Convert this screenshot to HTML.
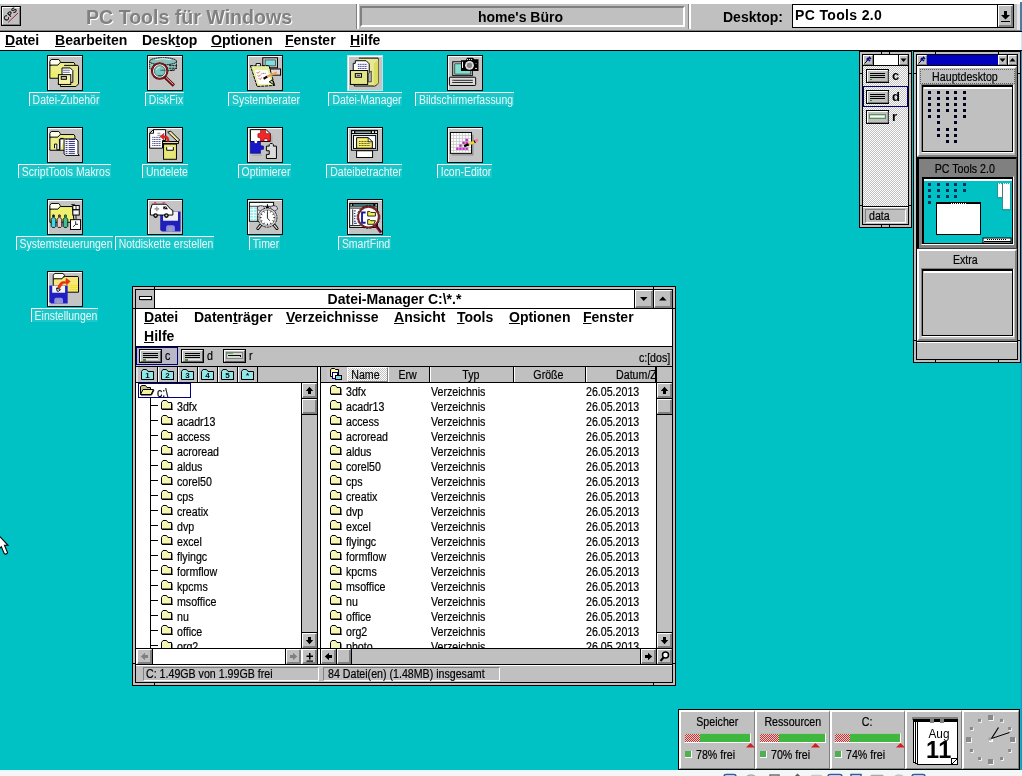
<!DOCTYPE html>
<html lang="de">
<head>
<meta charset="utf-8">
<title>PC Tools für Windows</title>
<style>
*{box-sizing:border-box;margin:0;padding:0}
html,body{width:1022px;height:776px;overflow:hidden}
body{position:relative;background:#00c2c4;font-family:"Liberation Sans",sans-serif;color:#000;font-size:12.5px;line-height:1}
#w{position:absolute;left:0;top:0;width:1022px;height:776px;overflow:hidden;will-change:transform}
.a{position:absolute}
.b{font-weight:bold;font-size:14px;white-space:nowrap}
u{text-decoration:underline;text-underline-offset:1px;text-decoration-thickness:1px}
.s{font-size:12.3px;line-height:17px;white-space:nowrap;-webkit-text-stroke:.2px #000;transform:scaleX(.865);transform-origin:0 0;display:inline-block}
.g{background:#c0c0c0}
/* top bar */
#top{left:0;top:0;width:1022px;height:32px;background:#c0c0c0;border-top:4px solid #fff;border-bottom:1px solid #000;box-shadow:inset 0 -1px 0 #808080}
#menu{left:0;top:32px;width:1022px;height:19px;background:#fff;border-bottom:1px solid #000}
#menu span{position:absolute;top:1px}
.raised{border:1px solid;border-color:#fff #808080 #808080 #fff}
.sunken{border:1px solid;border-color:#808080 #fff #fff #808080}
/* desktop icons */
.ic{width:36px;height:36px;border:1px solid #000;background:#c4c4c4;overflow:hidden;box-shadow:inset 1px 1px 0 #fff}
.ic svg{position:absolute;left:0;top:0}
.il{height:14px;background:rgba(255,255,255,.1);color:rgba(255,255,255,.9);font-size:12.3px;line-height:14px;white-space:nowrap;border-left:1px solid #fff;border-top:1px solid #fff}
.il span{position:absolute;left:50%;top:0;margin-left:1px;display:inline-block;transform:translateX(-50%) scaleX(.85)}
.ic.sel{border-color:#b8e4e4}
/* file manager */
.bt{background:#c0c0c0;border:1px solid;border-color:#fff #808080 #808080 #fff;box-shadow:inset -1px -1px 0 #808080}
.bt svg{left:0;top:0}
.row{white-space:nowrap;overflow:hidden;width:140px}
.row .fi{position:absolute;left:0;top:1px}
.row .s{position:absolute;top:0px}
.hc{position:relative;top:0px;transform-origin:50% 0}
.mi{line-height:16px}
/* right-hand windows */
.tb{background:#c0c0c0;border:1px solid;border-color:#fff #808080 #808080 #fff}
.tb svg{left:-1px !important;top:-1px !important}

</style>
</head>
<body>
<div id="w">
<div id="top" class="a">
  <div class="a" style="left:1px;top:2px;width:20px;height:20px;border:1px solid #000;background:#c0c0c0">
    <div class="a" style="left:0;top:0;width:18px;height:18px;border:1px solid;border-color:#fff #808080 #808080 #fff"></div>
    <svg class="a" style="left:0;top:0" width="18" height="18" viewBox="0 0 18 18"><line x1="6" y1="15.500" x2="16" y2="6" stroke="#a02040" stroke-width="1"/><text x="0" y="0" font-size="7" font-family="Liberation Sans,sans-serif" transform="translate(4.200 14.400) rotate(-45)" fill="#000" stroke="#000" stroke-width=".3" letter-spacing="0.700">CPS</text></svg>
  </div>
  <div class="a" id="ttl" style="left:86px;top:2px;font-weight:bold;font-size:20.5px;line-height:22px;color:#808080;text-shadow:1px 1px 0 #fff;white-space:nowrap;transform:scaleX(.955);transform-origin:0 0">PC Tools für Windows</div>
  <div class="a" style="left:356px;top:0px;width:3px;height:25px;border-left:1px solid #808080;background:#fff"></div>
  <div class="a" style="left:360px;top:2px;width:325px;height:21px;border:2px solid;border-color:#808080 #fff #fff #808080"></div>
  <div class="a b" id="hb" style="left:478px;top:6px">home's Büro</div>
  <div class="a" style="left:688px;top:0px;width:3px;height:25px;border-left:1px solid #808080;background:#fff"></div>
  <div class="a b" id="dl" style="left:723px;top:6px">Desktop:</div>
  <div class="a" style="left:792px;top:0px;width:222px;height:24px;border:1px solid #000;background:#fff">
    <div class="a b" id="cb" style="left:2px;top:3px;letter-spacing:.35px">PC Tools 2.0</div>
    <div class="a" style="left:204px;top:0px;width:1px;height:22px;background:#000"></div>
    <div class="a" style="left:205px;top:0px;width:15px;height:22px;background:#c0c0c0;border:1px solid;border-color:#fff #808080 #808080 #fff;box-shadow:inset -1px -1px 0 #808080">
      <svg class="a" style="left:0;top:0" width="13" height="20" viewBox="0 0 13 20"><path d="M5 5h3v4h3l-4.500 4.500l-4.500 -4.500h3z" fill="#000"/><rect x="2" y="15" width="9" height="1" fill="#000"/></svg>
    </div>
  </div>
  <div class="a" style="left:1017px;top:0px;width:3px;height:26px;background:#e4e4e4"></div>
  <div class="a" style="left:1020px;top:-2px;width:2px;height:29px;background:#4c7ca4"></div>
</div>
<div id="menu" class="a b">
  <div class="a" style="left:1021px;top:0;width:1px;height:18px;background:#c8ecf8"></div>
  <span style="left:5px"><u>D</u>atei</span>
  <span style="left:55px"><u>B</u>earbeiten</span>
  <span style="left:142px">Desk<u>t</u>op</span>
  <span style="left:211px"><u>O</u>ptionen</span>
  <span style="left:285px"><u>F</u>enster</span>
  <span style="left:350px"><u>H</u>ilfe</span>
</div>

<div class="a" style="left:1020px;top:51px;width:1px;height:719px;background:#08b4cc"></div>
<div class="a" style="left:1021px;top:51px;width:1px;height:719px;background:#1898c0;z-index:5"></div>
<div class="a ic" style="left:47px;top:55px"><svg width="40" height="40" viewBox="0 0 776 776" style="left:-3px;top:-3px"><path d="M95 490V235L300 185H560L580 215V490Z" fill="#eeee88" stroke="#000" stroke-width="19" stroke-linejoin="miter"/><path d="M95 235V160L120 125H265L295 160V185L250 235Z" fill="#fffff0" stroke="#000" stroke-width="19" stroke-linejoin="miter"/><path d="M300 650V600H250M370 240H640L650 260V600L600 650H300" fill="#e4e490" stroke="#000" stroke-width="19" stroke-linejoin="miter"/><path d="M330 420V290H490L540 340V570H490" fill="#fff" stroke="#000" stroke-width="19" stroke-linejoin="miter"/><path d="M350 335H480M350 375H480" stroke="#404060" stroke-width="14" fill="none"/><rect x="260" y="420" width="240" height="190" fill="#f4f4a8" stroke="#000" stroke-width="19" stroke-linejoin="miter"/><rect x="315" y="455" width="100" height="55" fill="#c8c8a0" stroke="#000" stroke-width="19" stroke-linejoin="miter"/><path d="M110 400H240M110 440H240" stroke="#f0f040" stroke-width="18"/></svg></div>
<div class="a il" style="left:29px;top:92px;width:71px"><span>Datei-Zubehör</span></div>
<div class="a ic" style="left:147px;top:55px"><svg width="40" height="40" viewBox="0 0 776 776" style="left:-3px;top:-3px"><path d="M90 170V300Q200 350 350 350T610 300V170" fill="#9cc8c4" stroke="#000" stroke-width="16" stroke-dasharray="26 12"/><ellipse cx="350" cy="160" rx="262" ry="70" fill="#8cc0bc" stroke="#000" stroke-width="18" stroke-dasharray="34 10"/><path d="M200 130Q350 90 500 130" stroke="#e8f4f4" stroke-width="18" fill="none"/><path d="M470 245H620M470 295H620M490 340H570" stroke="#000" stroke-width="18" stroke-dasharray="44 14"/><path d="M390 470L560 630" stroke="#400808" stroke-width="62"/><path d="M395 470L555 622" stroke="#a02020" stroke-width="34"/><path d="M405 470L550 608" stroke="#fff" stroke-width="12"/><circle cx="285" cy="350" r="150" fill="#fff" stroke="#500808" stroke-width="40"/><circle cx="285" cy="350" r="150" fill="none" stroke="#a02020" stroke-width="16"/><circle cx="285" cy="350" r="105" fill="#78c8c0" stroke="#103030" stroke-width="12"/><path d="M300 335H400M250 435H350" stroke="#104040" stroke-width="14"/><path d="M215 330Q240 280 300 270" stroke="#d8f4f0" stroke-width="18" fill="none"/></svg></div>
<div class="a il" style="left:145px;top:92px;width:39px"><span>DiskFix</span></div>
<div class="a ic" style="left:247px;top:55px"><svg width="40" height="40" viewBox="0 0 776 776" style="left:-3px;top:-3px"><rect x="345" y="92" width="285" height="195" fill="#c8c8c8" stroke="#000" stroke-width="19" stroke-linejoin="miter"/><rect x="390" y="135" width="200" height="115" fill="#80e0e0" stroke="#000" stroke-width="10"/><rect x="490" y="310" width="200" height="120" fill="#e4d8d8" stroke="#000" stroke-width="19" stroke-linejoin="miter"/><path d="M105 245H465L575 630L235 650Z" fill="#e8f0a0" stroke="#000" stroke-width="19" stroke-linejoin="miter" stroke-dasharray="60 14"/><path d="M185 330H435L520 600H265Z" fill="#fff"/><path d="M215 245V205H300V245" fill="#fff" stroke="#000" stroke-width="19" stroke-linejoin="miter"/><path d="M225 370l25 25l40-40M245 430l25 25l40-40M265 490l25 25l40-40" stroke="#d03030" stroke-width="14" fill="none"/><path d="M320 395H410" stroke="#303030" stroke-width="12" fill="none" stroke-dasharray="20 10"/><path d="M360 500L440 455" stroke="#000" stroke-width="40"/><path d="M430 460L620 375" stroke="#f0a050" stroke-width="40"/><path d="M470 560l60-40l40 100z" fill="#c0e070" stroke="#000" stroke-width="19" stroke-linejoin="miter"/></svg></div>
<div class="a il" style="left:228px;top:92px;width:72px"><span>Systemberater</span></div>
<div class="a ic sel" style="left:347px;top:55px"><svg width="40" height="40" viewBox="0 0 776 776" style="left:-3px;top:-3px"><path d="M180 640V600M270 100H640L650 120V580L590 640H180" fill="#e8e898" stroke="#000" stroke-width="19" stroke-linejoin="miter"/><path d="M560 200L650 120V580L560 640Z" fill="#dcdc60"/><path d="M160 340V200H200V150H410L470 210V370" fill="#fff" stroke="#000" stroke-width="19" stroke-linejoin="miter"/><path d="M250 220H430M250 260H430M250 300H430" stroke="#202080" stroke-width="16" fill="none" stroke-dasharray="26 8"/><path d="M450 400L510 350V560H450Z" fill="#b8b8b8" stroke="#000" stroke-width="12"/><rect x="105" y="340" width="335" height="270" fill="#e4e488" stroke="#000" stroke-width="19" stroke-linejoin="miter"/><rect x="200" y="400" width="120" height="70" fill="#d8d8c0" stroke="#000" stroke-width="19" stroke-linejoin="miter"/><path d="M230 435H290" stroke="#000" stroke-width="14"/></svg></div>
<div class="a il" style="left:328px;top:92px;width:74px"><span>Datei-Manager</span></div>
<div class="a ic" style="left:447px;top:55px"><svg width="40" height="40" viewBox="0 0 776 776" style="left:-3px;top:-3px"><rect x="150" y="170" width="380" height="270" fill="#d8d8d8" stroke="#000" stroke-width="19" stroke-linejoin="miter"/><rect x="190" y="210" width="310" height="200" fill="#80e0d0" stroke="#000" stroke-width="12"/><rect x="85" y="470" width="510" height="160" rx="15" fill="#dcdcdc" stroke="#000" stroke-width="19" stroke-linejoin="miter"/><path d="M140 530H540M140 572H540" stroke="#000" stroke-width="16" fill="none"/><rect x="140" y="520" width="30" height="18" fill="#e06080"/><path d="M310 350V140H400L430 90H540L570 120H650V350Z" fill="#000"/><circle cx="475" cy="240" r="85" fill="#e8e8e8"/><circle cx="475" cy="240" r="60" fill="#888"/><circle cx="475" cy="240" r="60" fill="none" stroke="#fff" stroke-width="18" stroke-dasharray="14 14"/><rect x="330" y="170" width="20" height="120" fill="#fff"/><path d="M425 125H530" stroke="#fff" stroke-width="18" stroke-dasharray="22 18"/><rect x="585" y="290" width="35" height="18" fill="#fff"/><rect x="585" y="195" width="35" height="14" fill="#806060"/></svg></div>
<div class="a il" style="left:415px;top:92px;width:99px"><span>Bildschirmerfassung</span></div>
<div class="a ic" style="left:47px;top:127px"><svg width="40" height="40" viewBox="0 0 776 776" style="left:-3px;top:-3px"><path d="M95 490V235L300 185H560L580 215V490Z" fill="#eeee88" stroke="#000" stroke-width="19" stroke-linejoin="miter"/><path d="M95 235V160L120 125H265L295 160V185L250 235Z" fill="#fffff0" stroke="#000" stroke-width="19" stroke-linejoin="miter"/><path d="M185 450V370H230V480H280V280L300 260H360" fill="#fff" stroke="#000" stroke-width="19" stroke-linejoin="miter"/><path d="M290 500V270H600L640 310V560L665 590H400L370 560V280" fill="#fff" stroke="#000" stroke-width="19" stroke-linejoin="miter"/><path d="M400 282H580M400 320H580M400 358H580M400 396H580M400 436H580M400 474H580M400 512H580M400 550H580" stroke="#181870" stroke-width="17" fill="none" stroke-dasharray="36 24 200"/></svg></div>
<div class="a il" style="left:18px;top:164px;width:93px"><span>ScriptTools Makros</span></div>
<div class="a ic" style="left:147px;top:127px"><svg width="40" height="40" viewBox="0 0 776 776" style="left:-3px;top:-3px"><path d="M90 450V160L165 90H400V300H340V450Z" fill="#fff" stroke="#000" stroke-width="19" stroke-linejoin="miter"/><path d="M90 160H165V90" fill="none" stroke="#000" stroke-width="19" stroke-linejoin="miter"/><path d="M140 240H310M140 280H310M140 320H310M140 358H310M140 398H310" stroke="#303080" stroke-width="16" fill="none" stroke-dasharray="24 8"/><path d="M240 160H300M240 200H300" stroke="#606060" stroke-width="14" fill="none"/><path d="M440 140L500 120L670 290L640 330Z" fill="#f0e8a0" stroke="#000" stroke-width="19" stroke-linejoin="miter"/><path d="M340 320H650V360H340Z" fill="#e8e0a0" stroke="#000" stroke-width="19" stroke-linejoin="miter"/><rect x="360" y="370" width="250" height="295" fill="#e8e878" stroke="#000" stroke-width="19" stroke-linejoin="miter"/><path d="M420 430V490H550V430" fill="#fff" stroke="#000" stroke-width="19" stroke-linejoin="miter"/><path d="M470 320C470 230 420 200 360 210L370 160L290 220L370 290L370 250C410 245 430 270 430 320Z" fill="#e82020" stroke="#a01010" stroke-width="8"/></svg></div>
<div class="a il" style="left:142px;top:164px;width:46px"><span>Undelete</span></div>
<div class="a ic" style="left:247px;top:127px"><svg width="40" height="40" viewBox="0 0 776 776" style="left:-3px;top:-3px"><path d="M105 90H410L490 170V320H105Z" fill="#fff" stroke="#000" stroke-width="19" stroke-linejoin="miter"/><rect x="175" y="310" width="70" height="52" fill="#fff"/><path d="M300 100H400V165L490 170V310H440V270H370V310H300V250L250 240V170L300 160Z" fill="#f02828" stroke="#a00000" stroke-width="12"/><path d="M105 320H180V360H240V320H300V400L360 410V470L300 480V550H105Z" fill="#1818c8" stroke="#000080" stroke-width="12"/><path d="M470 410V380L490 360H530L550 380V410H610V650H415V570H470V500H415V410Z" fill="#dcdcdc" stroke="#000" stroke-width="19" stroke-linejoin="miter"/><path d="M140 585H330M522 200V340" stroke="#a0a0a0" stroke-width="18"/></svg></div>
<div class="a il" style="left:238px;top:164px;width:53px"><span>Optimierer</span></div>
<div class="a ic" style="left:347px;top:127px"><svg width="40" height="40" viewBox="0 0 776 776" style="left:-3px;top:-3px"><rect x="125" y="105" width="505" height="385" fill="#e0e0e0" stroke="#000" stroke-width="19" stroke-linejoin="miter"/><rect x="125" y="105" width="505" height="70" fill="#000"/><rect x="140" y="120" width="35" height="35" fill="#fff"/><rect x="525" y="120" width="35" height="35" fill="#fff"/><rect x="585" y="120" width="35" height="35" fill="#fff"/><rect x="200" y="123" width="300" height="32" fill="#80b0a8"/><rect x="165" y="205" width="430" height="250" fill="#fff" stroke="#000" stroke-width="19" stroke-linejoin="miter"/><path d="M225 450V245H450L530 325V450Z" fill="#f8f070" stroke="#000" stroke-width="19" stroke-linejoin="miter"/><path d="M450 245V325H530Z" fill="#fff" stroke="#000" stroke-width="14"/><path d="M270 320H490M270 358H490M270 398H490" stroke="#404010" stroke-width="16" fill="none" stroke-dasharray="22 8"/><rect x="225" y="500" width="310" height="130" fill="#fff" stroke="#000" stroke-width="19" stroke-linejoin="miter"/></svg></div>
<div class="a il" style="left:326px;top:164px;width:76px"><span>Dateibetrachter</span></div>
<div class="a ic" style="left:447px;top:127px"><svg width="40" height="40" viewBox="0 0 776 776" style="left:-3px;top:-3px"><path d="M130 580H540V190" stroke="#909090" stroke-width="26" fill="none"/><rect x="105" y="145" width="410" height="405" fill="#fff" stroke="#000" stroke-width="19" stroke-linejoin="miter"/><path d="M164 155V540M222 155V540M280 155V540M338 155V540M396 155V540M454 155V540M115 203H505M115 261H505M115 319H505M115 377H505M115 435H505M115 493H505" stroke="#c8c8c8" stroke-width="16"/><rect x="218" y="438" width="46" height="46" fill="#c030c0"/><rect x="278" y="438" width="46" height="46" fill="#c030c0"/><rect x="338" y="438" width="46" height="46" fill="#c030c0"/><rect x="398" y="438" width="46" height="46" fill="#c030c0"/><rect x="278" y="378" width="46" height="46" fill="#c030c0"/><rect x="338" y="323" width="46" height="46" fill="#c030c0"/><rect x="398" y="268" width="46" height="46" fill="#c030c0"/><rect x="398" y="323" width="46" height="46" fill="#c030c0"/><path d="M370 410L470 370" stroke="#000" stroke-width="50"/><path d="M460 375L570 325" stroke="#f0d040" stroke-width="55"/><path d="M570 320L640 285" stroke="#f08090" stroke-width="55"/><path d="M560 300L590 350" stroke="#000" stroke-width="20"/></svg></div>
<div class="a il" style="left:437px;top:164px;width:55px"><span>Icon-Editor</span></div>
<div class="a ic" style="left:47px;top:199px"><svg width="40" height="40" viewBox="0 0 776 776" style="left:-3px;top:-3px"><path d="M95 490V235L300 185H530L560 440V490Z" fill="#eef070" stroke="#000" stroke-width="19" stroke-linejoin="miter"/><path d="M95 235V160L120 125H265L295 160V185L250 235Z" fill="#fffff0" stroke="#000" stroke-width="19" stroke-linejoin="miter"/><path d="M150 400V350H180V400L210 430V570L190 590H140L120 570V430Z" fill="#40d8e8" stroke="#000" stroke-width="16"/><rect x="152" y="345" width="26" height="50" fill="#201060"/><path d="M265 400V350H295V400L325 430V570L305 590H255L235 570V430Z" fill="#e8c8c8" stroke="#000" stroke-width="16"/><rect x="267" y="345" width="26" height="50" fill="#803020"/><path d="M382 400V350H412V400L442 430V570L422 590H372L352 570V430Z" fill="#40c090" stroke="#000" stroke-width="16"/><rect x="384" y="345" width="26" height="50" fill="#208040"/><rect x="540" y="165" width="125" height="80" fill="#fff" stroke="#000" stroke-width="19" stroke-linejoin="miter"/><rect x="540" y="250" width="125" height="100" fill="#f8f0f8" stroke="#000" stroke-width="19" stroke-linejoin="miter"/><path d="M602 165V245M510 145H580M602 350V440" stroke="#000" stroke-width="16"/><rect x="495" y="440" width="195" height="190" fill="#fff" stroke="#000" stroke-width="19" stroke-linejoin="miter"/><path d="M595 470V530H640M595 530L545 580" stroke="#000" stroke-width="16" fill="none"/></svg></div>
<div class="a il" style="left:16px;top:236px;width:97px"><span>Systemsteuerungen</span></div>
<div class="a ic" style="left:147px;top:199px"><svg width="40" height="40" viewBox="0 0 776 776" style="left:-3px;top:-3px"><path d="M295 280H690V670H330L295 640Z" fill="#2020b8"/><rect x="350" y="285" width="290" height="175" fill="#f0f0f0"/><path d="M410 670V590Q410 550 450 550H540Q580 550 580 590V670Z" fill="#9090e8"/><rect x="460" y="590" width="60" height="80" fill="#a0a0b0"/><path d="M105 250L140 140H410L500 240L540 260V350H105Z" fill="#fff" stroke="#000" stroke-width="19" stroke-linejoin="miter"/><rect x="175" y="100" width="45" height="35" fill="#e04060"/><rect x="340" y="100" width="45" height="35" fill="#e04060"/><path d="M230 185V275M185 230H275" stroke="#a0a0a0" stroke-width="30"/><path d="M355 185H410L445 240H355Z" fill="#000"/><path d="M375 225L410 195" stroke="#fff" stroke-width="12"/><circle cx="205" cy="360" r="45" fill="#000"/><circle cx="205" cy="360" r="20" fill="#d0d0d0"/><circle cx="415" cy="360" r="45" fill="#000"/><circle cx="415" cy="360" r="20" fill="#d0d0d0"/></svg></div>
<div class="a il" style="left:115px;top:236px;width:99px"><span>Notdiskette erstellen</span></div>
<div class="a ic" style="left:247px;top:199px"><svg width="40" height="40" viewBox="0 0 776 776" style="left:-3px;top:-3px"><rect x="85" y="105" width="470" height="365" fill="#fff" stroke="#000" stroke-width="19" stroke-linejoin="miter"/><path d="M85 180H555M240 180V470" stroke="#000" stroke-width="14"/><rect x="100" y="200" width="55" height="36" fill="#90f0f0"/><rect x="170" y="200" width="55" height="36" fill="#90f0f0"/><rect x="100" y="255" width="55" height="36" fill="#90f0f0"/><rect x="170" y="255" width="55" height="36" fill="#90f0f0"/><rect x="100" y="310" width="55" height="36" fill="#90f0f0"/><rect x="170" y="310" width="55" height="36" fill="#90f0f0"/><rect x="100" y="365" width="55" height="36" fill="#90f0f0"/><rect x="170" y="365" width="55" height="36" fill="#90f0f0"/><rect x="100" y="420" width="55" height="36" fill="#90f0f0"/><rect x="170" y="420" width="55" height="36" fill="#90f0f0"/><path d="M300 550L250 610M570 550L620 610" stroke="#000" stroke-width="60" stroke-linecap="round"/><path d="M300 550L250 610M570 550L620 610" stroke="#e0e0e0" stroke-width="26" stroke-linecap="round"/><ellipse cx="310" cy="220" rx="70" ry="50" fill="#d8d0e0" stroke="#000" stroke-width="16" stroke-dasharray="30 10"/><ellipse cx="560" cy="220" rx="70" ry="50" fill="#d8d0e0" stroke="#000" stroke-width="16" stroke-dasharray="30 10"/><path d="M435 140V230M400 180L435 230L470 180" stroke="#000" stroke-width="20" fill="none"/><circle cx="435" cy="400" r="185" fill="#d8d8d8" stroke="#000" stroke-width="16" stroke-dasharray="40 12"/><circle cx="435" cy="400" r="150" fill="#fff" stroke="#404040" stroke-width="10"/><path d="M435 285L435 255M492 300L508 274M535 342L561 328M550 400L580 400M535 458L561 472M492 500L508 526M435 515L435 545M378 500L362 526M335 458L309 473M320 400L290 400M335 342L309 328M377 300L362 274" stroke="#000" stroke-width="18"/><path d="M435 290V410L480 460" stroke="#000" stroke-width="16" fill="none"/></svg></div>
<div class="a il" style="left:249px;top:236px;width:31px"><span>Timer</span></div>
<div class="a ic" style="left:347px;top:199px"><svg width="40" height="40" viewBox="0 0 776 776" style="left:-3px;top:-3px"><rect x="90" y="125" width="540" height="465" fill="#fff" stroke="#000" stroke-width="19" stroke-linejoin="miter"/><rect x="90" y="125" width="540" height="62" fill="#000"/><rect x="105" y="140" width="30" height="30" fill="#e0e0e0"/><rect x="590" y="140" width="30" height="30" fill="#e0e0e0"/><rect x="160" y="142" width="390" height="26" fill="#60b0b0"/><path d="M100 215H630M100 555H300" stroke="#000" stroke-width="18"/><path d="M150 240V540" stroke="#000" stroke-width="18"/><path d="M175 270H210M175 320H200M175 370H210M175 420H200M175 470H210M175 510H230" stroke="#101060" stroke-width="18"/><path d="M590 540L700 690" stroke="#801040" stroke-width="55"/><path d="M600 540L700 675" stroke="#000" stroke-width="16"/><circle cx="455" cy="390" r="200" fill="#fff" stroke="#802020" stroke-width="36"/><circle cx="455" cy="390" r="222" fill="none" stroke="#000" stroke-width="12" stroke-dasharray="50 20"/><path d="M400 300H330V500H400" stroke="#1818a0" stroke-width="36" fill="none"/><path d="M440 370V280H480L500 300H590V370Z" fill="#f0f050" stroke="#000" stroke-width="16"/><path d="M440 530V440H480L500 460H590L560 530Z" fill="#f0f050" stroke="#000" stroke-width="16"/></svg></div>
<div class="a il" style="left:338px;top:236px;width:53px"><span>SmartFind</span></div>
<div class="a ic" style="left:47px;top:271px"><svg width="40" height="40" viewBox="0 0 776 776" style="left:-3px;top:-3px"><path d="M160 450V190L400 145H640L650 160V450Z" fill="#f4e878" stroke="#000" stroke-width="19" stroke-linejoin="miter"/><path d="M160 190V120L190 85H350L380 125L330 190Z" fill="#fffff0" stroke="#000" stroke-width="19" stroke-linejoin="miter"/><path d="M480 400H640M480 360H640M480 320H640" stroke="#f0e020" stroke-width="18"/><path d="M85 320H440V670H120L85 640Z" fill="#2020c0"/><rect x="140" y="325" width="250" height="135" fill="#f4f4f4"/><path d="M180 670V600Q180 560 220 560H310Q350 560 350 600V670Z" fill="#9090e8"/><rect x="230" y="600" width="60" height="70" fill="#a0a0b0"/><path d="M240 370C290 250 330 230 400 250L410 180L490 240L420 310L415 280C350 270 320 300 290 380Z" fill="#f03010" stroke="#c02000" stroke-width="8"/><path d="M225 370L300 400L270 430L235 430Z" fill="#fff" stroke="#000" stroke-width="18"/></svg></div>
<div class="a il" style="left:31px;top:308px;width:67px"><span>Einstellungen</span></div>
<svg class="a" style="left:0;top:530px" width="12" height="30" viewBox="0 530 12 30"><path d="M-4 532.500L8 545.300H4.500L7.600 552.800L5.800 554.300L4.300 553.600L1.300 546.800L-2 550Z" fill="#fff" stroke="#000" stroke-width="1.100"/></svg>

<div id="fm" class="a" style="left:132px;top:286px;width:544px;height:400px;background:#c0c0c0;border:1px solid #000"><div class="a" style="left:2px;top:2px;width:538px;height:394px;border:1px solid #000"></div><div class="a" style="left:21px;top:0;width:1px;height:3px;background:#000"></div><div class="a" style="left:520px;top:0;width:1px;height:3px;background:#000"></div><div class="a" style="left:21px;top:395px;width:1px;height:3px;background:#000"></div><div class="a" style="left:520px;top:395px;width:1px;height:3px;background:#000"></div><div class="a" style="left:0;top:21px;width:3px;height:1px;background:#000"></div><div class="a" style="left:0;top:376px;width:3px;height:1px;background:#000"></div><div class="a" style="left:539px;top:21px;width:3px;height:1px;background:#000"></div><div class="a" style="left:539px;top:376px;width:3px;height:1px;background:#000"></div><div class="a" id="fmc" style="left:3px;top:3px;width:536px;height:392px;overflow:hidden">
<div class="a" style="left:0px;top:0px;width:536px;height:18px;background:#fff"></div>
<div class="a" style="left:0px;top:0px;width:18px;height:18px;background:#c0c0c0"><svg class="a" style="left:0;top:0;" width="18" height="18" viewBox="0 0 18 18"><rect x="4.500" y="7.500" width="12" height="3" fill="#808080"/><rect x="3.500" y="6.500" width="12" height="3" fill="#fff" stroke="#000"/></svg></div>
<div class="a" style="left:18px;top:0px;width:1px;height:18px;background:#000"></div>
<div class="a" style="left:19px;top:0px;width:479px;height:18px;text-align:center"><span class="b" style="position:relative;top:2px">Datei-Manager C:\*.*</span></div>
<div class="a" style="left:498px;top:0px;width:1px;height:18px;background:#000"></div>
<div class="a bt" style="left:499px;top:0px;width:18px;height:18px;"><svg class="a" style="left:0;top:0;" width="16" height="16" viewBox="0 0 16 16"><path d="M4 6h7.500l-3.750 4z" fill="#000"/></svg></div>
<div class="a" style="left:517px;top:0px;width:1px;height:18px;background:#000"></div>
<div class="a bt" style="left:518px;top:0px;width:18px;height:18px;"><svg class="a" style="left:0;top:0;" width="16" height="16" viewBox="0 0 16 16"><path d="M4 9.500h7.500l-3.750 -4z" fill="#000"/></svg></div>
<div class="a" style="left:0px;top:18px;width:536px;height:1px;background:#000"></div>
<div class="a" style="left:0px;top:19px;width:536px;height:37px;background:#fff"></div>
<span class="a b mi" style="left:8px;top:19px"><u>D</u>atei</span>
<span class="a b mi" style="left:58px;top:19px">Daten<u>t</u>räger</span>
<span class="a b mi" style="left:150px;top:19px"><u>V</u>erzeichnisse</span>
<span class="a b mi" style="left:258px;top:19px"><u>A</u>nsicht</span>
<span class="a b mi" style="left:321px;top:19px"><u>T</u>ools</span>
<span class="a b mi" style="left:373px;top:19px"><u>O</u>ptionen</span>
<span class="a b mi" style="left:447px;top:19px"><u>F</u>enster</span>
<span class="a b mi" style="left:8px;top:38px"><u>H</u>ilfe</span>
<div class="a" style="left:0px;top:56px;width:536px;height:1px;background:#000"></div>
<div class="a" style="left:0px;top:57px;width:536px;height:19px;background:#c0c0c0"></div>
<div class="a" style="left:0px;top:57px;width:42px;height:18px;border:1px solid #000080;background:#b8b8c8"></div>
<div class="a" style="left:3px;top:59px;width:23px;height:14px;"><svg class="a" style="left:0;top:0;" width="23" height="14" viewBox="0 0 23 14"><rect x="0.500" y="0.500" width="22" height="13" fill="#c0c0c0" stroke="#000"/><path d="M1.500 12V1.500H21" stroke="#fff" fill="none"/><path d="M2 12.500h20M21.500 2v11" stroke="#606060" fill="none"/><path d="M4 4.500h15M4 6.500h15M4 8.500h15" stroke="#000" fill="none"/><path d="M4 10.500h15" stroke="#e8e8e8"/><rect x="4" y="10" width="3" height="2" fill="#409040"/></svg></div>
<span class="a s" style="left:29px;top:58px">c</span>
<div class="a" style="left:45px;top:59px;width:23px;height:14px;"><svg class="a" style="left:0;top:0;" width="23" height="14" viewBox="0 0 23 14"><rect x="0.500" y="0.500" width="22" height="13" fill="#c0c0c0" stroke="#000"/><path d="M1.500 12V1.500H21" stroke="#fff" fill="none"/><path d="M2 12.500h20M21.500 2v11" stroke="#606060" fill="none"/><path d="M4 4.500h15M4 6.500h15M4 8.500h15" stroke="#000" fill="none"/><path d="M4 10.500h15" stroke="#e8e8e8"/><rect x="4" y="10" width="3" height="2" fill="#409040"/></svg></div>
<span class="a s" style="left:71px;top:58px">d</span>
<div class="a" style="left:87px;top:59px;width:23px;height:14px;"><svg class="a" style="left:0;top:0;" width="23" height="14" viewBox="0 0 23 14"><rect x="0.500" y="0.500" width="22" height="13" fill="#c0c0c0" stroke="#000"/><path d="M1.500 12V1.500H21" stroke="#fff" fill="none"/><path d="M2 12.500h20M21.500 2v11" stroke="#606060" fill="none"/><rect x="3.500" y="3.500" width="16" height="6" fill="#d0d8d0" stroke="#808080"/><path d="M4 4.500h6" stroke="#60c060"/><path d="M5 6.500h13M17.500 7v1" stroke="#000"/></svg></div>
<span class="a s" style="left:113px;top:58px">r</span>
<span class="a s" style="right:2px;top:60px;transform-origin:100% 0">c:[dos]</span>
<div class="a" style="left:0px;top:76px;width:536px;height:1px;background:#000"></div>
<div class="a" style="left:0px;top:77px;width:181px;height:15px;background:#c0c0c0"></div>
<div class="a" style="left:0px;top:77px;width:2px;height:15px;background:#e0e0e0"></div>
<div class="a" style="left:2px;top:77px;width:20px;height:15px;border-right:1px solid #000"><svg class="a" style="left:0;top:0;left:0" width="19" height="15" viewBox="0 0 19 15"><path d="M3.500 12.500V4.500L5 2.500H8.500L10 4.500H15.500V12.500Z" fill="#90e8e8" stroke="#000"/><path d="M4 12.500H16" stroke="#000"/><text x="9.500" y="11.300" font-size="8" font-weight="bold" text-anchor="middle" font-family="Liberation Sans,sans-serif" fill="#001010">1</text></svg></div>
<div class="a" style="left:22px;top:77px;width:20px;height:15px;border-right:1px solid #000;border-left:1px solid #fff"><svg class="a" style="left:0;top:0;left:-1px" width="19" height="15" viewBox="0 0 19 15"><path d="M3.500 12.500V4.500L5 2.500H8.500L10 4.500H15.500V12.500Z" fill="#90e8e8" stroke="#000"/><path d="M4 12.500H16" stroke="#000"/><text x="9.500" y="11.300" font-size="8" font-weight="bold" text-anchor="middle" font-family="Liberation Sans,sans-serif" fill="#001010">2</text></svg></div>
<div class="a" style="left:42px;top:77px;width:20px;height:15px;border-right:1px solid #000;border-left:1px solid #fff"><svg class="a" style="left:0;top:0;left:-1px" width="19" height="15" viewBox="0 0 19 15"><path d="M3.500 12.500V4.500L5 2.500H8.500L10 4.500H15.500V12.500Z" fill="#90e8e8" stroke="#000"/><path d="M4 12.500H16" stroke="#000"/><text x="9.500" y="11.300" font-size="8" font-weight="bold" text-anchor="middle" font-family="Liberation Sans,sans-serif" fill="#001010">3</text></svg></div>
<div class="a" style="left:62px;top:77px;width:20px;height:15px;border-right:1px solid #000;border-left:1px solid #fff"><svg class="a" style="left:0;top:0;left:-1px" width="19" height="15" viewBox="0 0 19 15"><path d="M3.500 12.500V4.500L5 2.500H8.500L10 4.500H15.500V12.500Z" fill="#90e8e8" stroke="#000"/><path d="M4 12.500H16" stroke="#000"/><text x="9.500" y="11.300" font-size="8" font-weight="bold" text-anchor="middle" font-family="Liberation Sans,sans-serif" fill="#001010">4</text></svg></div>
<div class="a" style="left:82px;top:77px;width:20px;height:15px;border-right:1px solid #000;border-left:1px solid #fff"><svg class="a" style="left:0;top:0;left:-1px" width="19" height="15" viewBox="0 0 19 15"><path d="M3.500 12.500V4.500L5 2.500H8.500L10 4.500H15.500V12.500Z" fill="#90e8e8" stroke="#000"/><path d="M4 12.500H16" stroke="#000"/><text x="9.500" y="11.300" font-size="8" font-weight="bold" text-anchor="middle" font-family="Liberation Sans,sans-serif" fill="#001010">5</text></svg></div>
<div class="a" style="left:102px;top:77px;width:20px;height:15px;border-right:1px solid #000;border-left:1px solid #fff"><svg class="a" style="left:0;top:0;left:-1px" width="19" height="15" viewBox="0 0 19 15"><path d="M3.500 12.500V4.500L5 2.500H8.500L10 4.500H15.500V12.500Z" fill="#90e8e8" stroke="#000"/><path d="M4 12.500H16" stroke="#000"/><text x="9.500" y="11.300" font-size="8" font-weight="bold" text-anchor="middle" font-family="Liberation Sans,sans-serif" fill="#001010">*</text></svg></div>
<div class="a" style="left:185px;top:77px;width:351px;height:15px;background:#c0c0c0"></div>
<div class="a" style="left:191px;top:77px;width:19px;height:15px;background:#c8c4c8"><svg class="a" style="left:0;top:0;" width="19" height="15" viewBox="0 0 19 15"><path d="M3.500 9.500V2.500L5 1.500H7.500L8.500 2.500H11.500V9.500Z" fill="#ffffa0" stroke="#000"/><rect x="5.500" y="5.500" width="5" height="6" fill="#fff" stroke="#000080"/><rect x="8.500" y="8.500" width="6" height="4" fill="#80e0e0" stroke="#000"/></svg></div>
<div class="a" style="left:211px;top:77px;width:41px;height:15px;background:repeating-conic-gradient(#fff 0 25%,#c0c0c0 0 50%) 0 0/2px 2px;border:1px solid;border-color:#fff #808080 #808080 #fff;text-align:center"><span class="s hc" style="top:-1px;left:-2px">Name</span></div>
<div class="a" style="left:252px;top:77px;width:42px;height:15px;border-right:1px solid #000;border-left:1px solid #fff;text-align:center;overflow:hidden;padding-right:3px;"><span class="s hc">Erw</span></div>
<div class="a" style="left:294px;top:77px;width:84px;height:15px;border-right:1px solid #000;border-left:1px solid #fff;text-align:center;overflow:hidden;padding-right:3px;"><span class="s hc">Typ</span></div>
<div class="a" style="left:378px;top:77px;width:72px;height:15px;border-right:1px solid #000;border-left:1px solid #fff;text-align:center;overflow:hidden;padding-right:3px;"><span class="s hc">Größe</span></div>
<div class="a" style="left:450px;top:77px;width:70px;height:15px;border-right:1px solid #000;border-left:1px solid #fff;text-align:left;overflow:hidden;padding-left:25px;"><span class="s hc">Datum/Zeit</span></div>
<div class="a" style="left:520px;top:77px;width:16px;height:15px;background:#c0c0c0"></div>
<div class="a" style="left:0px;top:92px;width:536px;height:1px;background:#000"></div>
<div class="a" style="left:0px;top:93px;width:165px;height:265px;background:#fff;overflow:hidden"></div>
<div class="a" style="left:2px;top:93px;width:53px;height:15px;border:1px solid #000080"></div>
<div class="a" style="left:4px;top:95px"><svg class="fi" width="15" height="11" viewBox="0 0 15 11"><path d="M0.500 9.500V1.500L2 0.500H5.500L7 2.500H10.500V4.500" fill="#c4c484" stroke="#000"/><path d="M0.500 9.500L3 4.500H13.500L11 9.500Z" fill="#f4f4a0" stroke="#000"/><path d="M1 10H11.500L14 5" stroke="#000" fill="none" stroke-width="1"/></svg></div>
<span class="a s" style="left:21px;top:95px">c:\</span>
<div class="a" style="left:14px;top:108px;width:1px;height:250px;background:#000"></div>
<div class="a" style="left:14px;top:115px;width:8px;height:1px;background:#000"></div>
<div class="a row" style="left:25px;top:109px;height:15px"><svg class="fi" width="13" height="11" viewBox="0 0 13 11"><path d="M0.500 9V2.500L2 0.500H5.500L7 2.500H10.500V9Z" fill="#f6f6b4" stroke="#000" stroke-width="1"/><path d="M1 9.500H11.500" stroke="#000" stroke-width="1" fill="none"/><path d="M11.500 3.500V10" stroke="#000" stroke-opacity=".45" stroke-width="1" fill="none"/></svg><span class="s" style="left:16px">3dfx</span></div>
<div class="a" style="left:14px;top:130px;width:8px;height:1px;background:#000"></div>
<div class="a row" style="left:25px;top:124px;height:15px"><svg class="fi" width="13" height="11" viewBox="0 0 13 11"><path d="M0.500 9V2.500L2 0.500H5.500L7 2.500H10.500V9Z" fill="#f6f6b4" stroke="#000" stroke-width="1"/><path d="M1 9.500H11.500" stroke="#000" stroke-width="1" fill="none"/><path d="M11.500 3.500V10" stroke="#000" stroke-opacity=".45" stroke-width="1" fill="none"/></svg><span class="s" style="left:16px">acadr13</span></div>
<div class="a" style="left:14px;top:145px;width:8px;height:1px;background:#000"></div>
<div class="a row" style="left:25px;top:139px;height:15px"><svg class="fi" width="13" height="11" viewBox="0 0 13 11"><path d="M0.500 9V2.500L2 0.500H5.500L7 2.500H10.500V9Z" fill="#f6f6b4" stroke="#000" stroke-width="1"/><path d="M1 9.500H11.500" stroke="#000" stroke-width="1" fill="none"/><path d="M11.500 3.500V10" stroke="#000" stroke-opacity=".45" stroke-width="1" fill="none"/></svg><span class="s" style="left:16px">access</span></div>
<div class="a" style="left:14px;top:160px;width:8px;height:1px;background:#000"></div>
<div class="a row" style="left:25px;top:154px;height:15px"><svg class="fi" width="13" height="11" viewBox="0 0 13 11"><path d="M0.500 9V2.500L2 0.500H5.500L7 2.500H10.500V9Z" fill="#f6f6b4" stroke="#000" stroke-width="1"/><path d="M1 9.500H11.500" stroke="#000" stroke-width="1" fill="none"/><path d="M11.500 3.500V10" stroke="#000" stroke-opacity=".45" stroke-width="1" fill="none"/></svg><span class="s" style="left:16px">acroread</span></div>
<div class="a" style="left:14px;top:175px;width:8px;height:1px;background:#000"></div>
<div class="a row" style="left:25px;top:169px;height:15px"><svg class="fi" width="13" height="11" viewBox="0 0 13 11"><path d="M0.500 9V2.500L2 0.500H5.500L7 2.500H10.500V9Z" fill="#f6f6b4" stroke="#000" stroke-width="1"/><path d="M1 9.500H11.500" stroke="#000" stroke-width="1" fill="none"/><path d="M11.500 3.500V10" stroke="#000" stroke-opacity=".45" stroke-width="1" fill="none"/></svg><span class="s" style="left:16px">aldus</span></div>
<div class="a" style="left:14px;top:190px;width:8px;height:1px;background:#000"></div>
<div class="a row" style="left:25px;top:184px;height:15px"><svg class="fi" width="13" height="11" viewBox="0 0 13 11"><path d="M0.500 9V2.500L2 0.500H5.500L7 2.500H10.500V9Z" fill="#f6f6b4" stroke="#000" stroke-width="1"/><path d="M1 9.500H11.500" stroke="#000" stroke-width="1" fill="none"/><path d="M11.500 3.500V10" stroke="#000" stroke-opacity=".45" stroke-width="1" fill="none"/></svg><span class="s" style="left:16px">corel50</span></div>
<div class="a" style="left:14px;top:205px;width:8px;height:1px;background:#000"></div>
<div class="a row" style="left:25px;top:199px;height:15px"><svg class="fi" width="13" height="11" viewBox="0 0 13 11"><path d="M0.500 9V2.500L2 0.500H5.500L7 2.500H10.500V9Z" fill="#f6f6b4" stroke="#000" stroke-width="1"/><path d="M1 9.500H11.500" stroke="#000" stroke-width="1" fill="none"/><path d="M11.500 3.500V10" stroke="#000" stroke-opacity=".45" stroke-width="1" fill="none"/></svg><span class="s" style="left:16px">cps</span></div>
<div class="a" style="left:14px;top:220px;width:8px;height:1px;background:#000"></div>
<div class="a row" style="left:25px;top:214px;height:15px"><svg class="fi" width="13" height="11" viewBox="0 0 13 11"><path d="M0.500 9V2.500L2 0.500H5.500L7 2.500H10.500V9Z" fill="#f6f6b4" stroke="#000" stroke-width="1"/><path d="M1 9.500H11.500" stroke="#000" stroke-width="1" fill="none"/><path d="M11.500 3.500V10" stroke="#000" stroke-opacity=".45" stroke-width="1" fill="none"/></svg><span class="s" style="left:16px">creatix</span></div>
<div class="a" style="left:14px;top:235px;width:8px;height:1px;background:#000"></div>
<div class="a row" style="left:25px;top:229px;height:15px"><svg class="fi" width="13" height="11" viewBox="0 0 13 11"><path d="M0.500 9V2.500L2 0.500H5.500L7 2.500H10.500V9Z" fill="#f6f6b4" stroke="#000" stroke-width="1"/><path d="M1 9.500H11.500" stroke="#000" stroke-width="1" fill="none"/><path d="M11.500 3.500V10" stroke="#000" stroke-opacity=".45" stroke-width="1" fill="none"/></svg><span class="s" style="left:16px">dvp</span></div>
<div class="a" style="left:14px;top:250px;width:8px;height:1px;background:#000"></div>
<div class="a row" style="left:25px;top:244px;height:15px"><svg class="fi" width="13" height="11" viewBox="0 0 13 11"><path d="M0.500 9V2.500L2 0.500H5.500L7 2.500H10.500V9Z" fill="#f6f6b4" stroke="#000" stroke-width="1"/><path d="M1 9.500H11.500" stroke="#000" stroke-width="1" fill="none"/><path d="M11.500 3.500V10" stroke="#000" stroke-opacity=".45" stroke-width="1" fill="none"/></svg><span class="s" style="left:16px">excel</span></div>
<div class="a" style="left:14px;top:265px;width:8px;height:1px;background:#000"></div>
<div class="a row" style="left:25px;top:259px;height:15px"><svg class="fi" width="13" height="11" viewBox="0 0 13 11"><path d="M0.500 9V2.500L2 0.500H5.500L7 2.500H10.500V9Z" fill="#f6f6b4" stroke="#000" stroke-width="1"/><path d="M1 9.500H11.500" stroke="#000" stroke-width="1" fill="none"/><path d="M11.500 3.500V10" stroke="#000" stroke-opacity=".45" stroke-width="1" fill="none"/></svg><span class="s" style="left:16px">flyingc</span></div>
<div class="a" style="left:14px;top:280px;width:8px;height:1px;background:#000"></div>
<div class="a row" style="left:25px;top:274px;height:15px"><svg class="fi" width="13" height="11" viewBox="0 0 13 11"><path d="M0.500 9V2.500L2 0.500H5.500L7 2.500H10.500V9Z" fill="#f6f6b4" stroke="#000" stroke-width="1"/><path d="M1 9.500H11.500" stroke="#000" stroke-width="1" fill="none"/><path d="M11.500 3.500V10" stroke="#000" stroke-opacity=".45" stroke-width="1" fill="none"/></svg><span class="s" style="left:16px">formflow</span></div>
<div class="a" style="left:14px;top:295px;width:8px;height:1px;background:#000"></div>
<div class="a row" style="left:25px;top:289px;height:15px"><svg class="fi" width="13" height="11" viewBox="0 0 13 11"><path d="M0.500 9V2.500L2 0.500H5.500L7 2.500H10.500V9Z" fill="#f6f6b4" stroke="#000" stroke-width="1"/><path d="M1 9.500H11.500" stroke="#000" stroke-width="1" fill="none"/><path d="M11.500 3.500V10" stroke="#000" stroke-opacity=".45" stroke-width="1" fill="none"/></svg><span class="s" style="left:16px">kpcms</span></div>
<div class="a" style="left:14px;top:310px;width:8px;height:1px;background:#000"></div>
<div class="a row" style="left:25px;top:304px;height:15px"><svg class="fi" width="13" height="11" viewBox="0 0 13 11"><path d="M0.500 9V2.500L2 0.500H5.500L7 2.500H10.500V9Z" fill="#f6f6b4" stroke="#000" stroke-width="1"/><path d="M1 9.500H11.500" stroke="#000" stroke-width="1" fill="none"/><path d="M11.500 3.500V10" stroke="#000" stroke-opacity=".45" stroke-width="1" fill="none"/></svg><span class="s" style="left:16px">msoffice</span></div>
<div class="a" style="left:14px;top:325px;width:8px;height:1px;background:#000"></div>
<div class="a row" style="left:25px;top:319px;height:15px"><svg class="fi" width="13" height="11" viewBox="0 0 13 11"><path d="M0.500 9V2.500L2 0.500H5.500L7 2.500H10.500V9Z" fill="#f6f6b4" stroke="#000" stroke-width="1"/><path d="M1 9.500H11.500" stroke="#000" stroke-width="1" fill="none"/><path d="M11.500 3.500V10" stroke="#000" stroke-opacity=".45" stroke-width="1" fill="none"/></svg><span class="s" style="left:16px">nu</span></div>
<div class="a" style="left:14px;top:340px;width:8px;height:1px;background:#000"></div>
<div class="a row" style="left:25px;top:334px;height:15px"><svg class="fi" width="13" height="11" viewBox="0 0 13 11"><path d="M0.500 9V2.500L2 0.500H5.500L7 2.500H10.500V9Z" fill="#f6f6b4" stroke="#000" stroke-width="1"/><path d="M1 9.500H11.500" stroke="#000" stroke-width="1" fill="none"/><path d="M11.500 3.500V10" stroke="#000" stroke-opacity=".45" stroke-width="1" fill="none"/></svg><span class="s" style="left:16px">office</span></div>
<div class="a" style="left:14px;top:355px;width:8px;height:1px;background:#000"></div>
<div class="a row" style="left:25px;top:349px;height:9px"><svg class="fi" width="13" height="11" viewBox="0 0 13 11"><path d="M0.500 9V2.500L2 0.500H5.500L7 2.500H10.500V9Z" fill="#f6f6b4" stroke="#000" stroke-width="1"/><path d="M1 9.500H11.500" stroke="#000" stroke-width="1" fill="none"/><path d="M11.500 3.500V10" stroke="#000" stroke-opacity=".45" stroke-width="1" fill="none"/></svg><span class="s" style="left:16px">org2</span></div>
<div class="a" style="left:165px;top:93px;width:1px;height:281px;background:#000"></div>
<div class="a" style="left:166px;top:93px;width:15px;height:265px;background:#c0c0c0"></div>
<div class="a bt" style="left:166px;top:93px;width:15px;height:15px;"><svg class="a" style="left:0;top:0;" width="13" height="13" viewBox="0 0 13 13"><path d="M6.500 2.800L10.200 7H8V10H5V7H2.800Z" fill="#000"/></svg></div>
<div class="a" style="left:166px;top:108px;width:15px;height:1px;background:#000"></div>
<div class="a bt" style="left:166px;top:109px;width:15px;height:15px;"></div>
<div class="a" style="left:166px;top:124px;width:15px;height:1px;background:#000"></div>
<div class="a" style="left:166px;top:342px;width:15px;height:1px;background:#000"></div>
<div class="a bt" style="left:166px;top:343px;width:15px;height:15px;"><svg class="a" style="left:0;top:0;" width="13" height="13" viewBox="0 0 13 13"><path d="M6.500 10.200L10.200 6H8V3H5V6H2.800Z" fill="#000"/></svg></div>
<div class="a" style="left:181px;top:77px;width:1px;height:297px;background:#000"></div>
<div class="a" style="left:182px;top:77px;width:2px;height:297px;background:#fff"></div>
<div class="a" style="left:184px;top:77px;width:1px;height:297px;background:#000"></div>
<div class="a" style="left:185px;top:93px;width:335px;height:265px;background:#fff"></div>
<div class="a row" style="left:194px;top:94px;height:15px;width:326px"><svg class="fi" width="13" height="11" viewBox="0 0 13 11"><path d="M0.500 9V2.500L2 0.500H5.500L7 2.500H10.500V9Z" fill="#f6f6b4" stroke="#000" stroke-width="1"/><path d="M1 9.500H11.500" stroke="#000" stroke-width="1" fill="none"/><path d="M11.500 3.500V10" stroke="#000" stroke-opacity=".45" stroke-width="1" fill="none"/></svg><span class="s" style="left:16px">3dfx</span><span class="s" style="left:101px">Verzeichnis</span><span class="s" style="left:256px">26.05.2013</span></div>
<div class="a row" style="left:194px;top:109px;height:15px;width:326px"><svg class="fi" width="13" height="11" viewBox="0 0 13 11"><path d="M0.500 9V2.500L2 0.500H5.500L7 2.500H10.500V9Z" fill="#f6f6b4" stroke="#000" stroke-width="1"/><path d="M1 9.500H11.500" stroke="#000" stroke-width="1" fill="none"/><path d="M11.500 3.500V10" stroke="#000" stroke-opacity=".45" stroke-width="1" fill="none"/></svg><span class="s" style="left:16px">acadr13</span><span class="s" style="left:101px">Verzeichnis</span><span class="s" style="left:256px">26.05.2013</span></div>
<div class="a row" style="left:194px;top:124px;height:15px;width:326px"><svg class="fi" width="13" height="11" viewBox="0 0 13 11"><path d="M0.500 9V2.500L2 0.500H5.500L7 2.500H10.500V9Z" fill="#f6f6b4" stroke="#000" stroke-width="1"/><path d="M1 9.500H11.500" stroke="#000" stroke-width="1" fill="none"/><path d="M11.500 3.500V10" stroke="#000" stroke-opacity=".45" stroke-width="1" fill="none"/></svg><span class="s" style="left:16px">access</span><span class="s" style="left:101px">Verzeichnis</span><span class="s" style="left:256px">26.05.2013</span></div>
<div class="a row" style="left:194px;top:139px;height:15px;width:326px"><svg class="fi" width="13" height="11" viewBox="0 0 13 11"><path d="M0.500 9V2.500L2 0.500H5.500L7 2.500H10.500V9Z" fill="#f6f6b4" stroke="#000" stroke-width="1"/><path d="M1 9.500H11.500" stroke="#000" stroke-width="1" fill="none"/><path d="M11.500 3.500V10" stroke="#000" stroke-opacity=".45" stroke-width="1" fill="none"/></svg><span class="s" style="left:16px">acroread</span><span class="s" style="left:101px">Verzeichnis</span><span class="s" style="left:256px">26.05.2013</span></div>
<div class="a row" style="left:194px;top:154px;height:15px;width:326px"><svg class="fi" width="13" height="11" viewBox="0 0 13 11"><path d="M0.500 9V2.500L2 0.500H5.500L7 2.500H10.500V9Z" fill="#f6f6b4" stroke="#000" stroke-width="1"/><path d="M1 9.500H11.500" stroke="#000" stroke-width="1" fill="none"/><path d="M11.500 3.500V10" stroke="#000" stroke-opacity=".45" stroke-width="1" fill="none"/></svg><span class="s" style="left:16px">aldus</span><span class="s" style="left:101px">Verzeichnis</span><span class="s" style="left:256px">26.05.2013</span></div>
<div class="a row" style="left:194px;top:169px;height:15px;width:326px"><svg class="fi" width="13" height="11" viewBox="0 0 13 11"><path d="M0.500 9V2.500L2 0.500H5.500L7 2.500H10.500V9Z" fill="#f6f6b4" stroke="#000" stroke-width="1"/><path d="M1 9.500H11.500" stroke="#000" stroke-width="1" fill="none"/><path d="M11.500 3.500V10" stroke="#000" stroke-opacity=".45" stroke-width="1" fill="none"/></svg><span class="s" style="left:16px">corel50</span><span class="s" style="left:101px">Verzeichnis</span><span class="s" style="left:256px">26.05.2013</span></div>
<div class="a row" style="left:194px;top:184px;height:15px;width:326px"><svg class="fi" width="13" height="11" viewBox="0 0 13 11"><path d="M0.500 9V2.500L2 0.500H5.500L7 2.500H10.500V9Z" fill="#f6f6b4" stroke="#000" stroke-width="1"/><path d="M1 9.500H11.500" stroke="#000" stroke-width="1" fill="none"/><path d="M11.500 3.500V10" stroke="#000" stroke-opacity=".45" stroke-width="1" fill="none"/></svg><span class="s" style="left:16px">cps</span><span class="s" style="left:101px">Verzeichnis</span><span class="s" style="left:256px">26.05.2013</span></div>
<div class="a row" style="left:194px;top:199px;height:15px;width:326px"><svg class="fi" width="13" height="11" viewBox="0 0 13 11"><path d="M0.500 9V2.500L2 0.500H5.500L7 2.500H10.500V9Z" fill="#f6f6b4" stroke="#000" stroke-width="1"/><path d="M1 9.500H11.500" stroke="#000" stroke-width="1" fill="none"/><path d="M11.500 3.500V10" stroke="#000" stroke-opacity=".45" stroke-width="1" fill="none"/></svg><span class="s" style="left:16px">creatix</span><span class="s" style="left:101px">Verzeichnis</span><span class="s" style="left:256px">26.05.2013</span></div>
<div class="a row" style="left:194px;top:214px;height:15px;width:326px"><svg class="fi" width="13" height="11" viewBox="0 0 13 11"><path d="M0.500 9V2.500L2 0.500H5.500L7 2.500H10.500V9Z" fill="#f6f6b4" stroke="#000" stroke-width="1"/><path d="M1 9.500H11.500" stroke="#000" stroke-width="1" fill="none"/><path d="M11.500 3.500V10" stroke="#000" stroke-opacity=".45" stroke-width="1" fill="none"/></svg><span class="s" style="left:16px">dvp</span><span class="s" style="left:101px">Verzeichnis</span><span class="s" style="left:256px">26.05.2013</span></div>
<div class="a row" style="left:194px;top:229px;height:15px;width:326px"><svg class="fi" width="13" height="11" viewBox="0 0 13 11"><path d="M0.500 9V2.500L2 0.500H5.500L7 2.500H10.500V9Z" fill="#f6f6b4" stroke="#000" stroke-width="1"/><path d="M1 9.500H11.500" stroke="#000" stroke-width="1" fill="none"/><path d="M11.500 3.500V10" stroke="#000" stroke-opacity=".45" stroke-width="1" fill="none"/></svg><span class="s" style="left:16px">excel</span><span class="s" style="left:101px">Verzeichnis</span><span class="s" style="left:256px">26.05.2013</span></div>
<div class="a row" style="left:194px;top:244px;height:15px;width:326px"><svg class="fi" width="13" height="11" viewBox="0 0 13 11"><path d="M0.500 9V2.500L2 0.500H5.500L7 2.500H10.500V9Z" fill="#f6f6b4" stroke="#000" stroke-width="1"/><path d="M1 9.500H11.500" stroke="#000" stroke-width="1" fill="none"/><path d="M11.500 3.500V10" stroke="#000" stroke-opacity=".45" stroke-width="1" fill="none"/></svg><span class="s" style="left:16px">flyingc</span><span class="s" style="left:101px">Verzeichnis</span><span class="s" style="left:256px">26.05.2013</span></div>
<div class="a row" style="left:194px;top:259px;height:15px;width:326px"><svg class="fi" width="13" height="11" viewBox="0 0 13 11"><path d="M0.500 9V2.500L2 0.500H5.500L7 2.500H10.500V9Z" fill="#f6f6b4" stroke="#000" stroke-width="1"/><path d="M1 9.500H11.500" stroke="#000" stroke-width="1" fill="none"/><path d="M11.500 3.500V10" stroke="#000" stroke-opacity=".45" stroke-width="1" fill="none"/></svg><span class="s" style="left:16px">formflow</span><span class="s" style="left:101px">Verzeichnis</span><span class="s" style="left:256px">26.05.2013</span></div>
<div class="a row" style="left:194px;top:274px;height:15px;width:326px"><svg class="fi" width="13" height="11" viewBox="0 0 13 11"><path d="M0.500 9V2.500L2 0.500H5.500L7 2.500H10.500V9Z" fill="#f6f6b4" stroke="#000" stroke-width="1"/><path d="M1 9.500H11.500" stroke="#000" stroke-width="1" fill="none"/><path d="M11.500 3.500V10" stroke="#000" stroke-opacity=".45" stroke-width="1" fill="none"/></svg><span class="s" style="left:16px">kpcms</span><span class="s" style="left:101px">Verzeichnis</span><span class="s" style="left:256px">26.05.2013</span></div>
<div class="a row" style="left:194px;top:289px;height:15px;width:326px"><svg class="fi" width="13" height="11" viewBox="0 0 13 11"><path d="M0.500 9V2.500L2 0.500H5.500L7 2.500H10.500V9Z" fill="#f6f6b4" stroke="#000" stroke-width="1"/><path d="M1 9.500H11.500" stroke="#000" stroke-width="1" fill="none"/><path d="M11.500 3.500V10" stroke="#000" stroke-opacity=".45" stroke-width="1" fill="none"/></svg><span class="s" style="left:16px">msoffice</span><span class="s" style="left:101px">Verzeichnis</span><span class="s" style="left:256px">26.05.2013</span></div>
<div class="a row" style="left:194px;top:304px;height:15px;width:326px"><svg class="fi" width="13" height="11" viewBox="0 0 13 11"><path d="M0.500 9V2.500L2 0.500H5.500L7 2.500H10.500V9Z" fill="#f6f6b4" stroke="#000" stroke-width="1"/><path d="M1 9.500H11.500" stroke="#000" stroke-width="1" fill="none"/><path d="M11.500 3.500V10" stroke="#000" stroke-opacity=".45" stroke-width="1" fill="none"/></svg><span class="s" style="left:16px">nu</span><span class="s" style="left:101px">Verzeichnis</span><span class="s" style="left:256px">26.05.2013</span></div>
<div class="a row" style="left:194px;top:319px;height:15px;width:326px"><svg class="fi" width="13" height="11" viewBox="0 0 13 11"><path d="M0.500 9V2.500L2 0.500H5.500L7 2.500H10.500V9Z" fill="#f6f6b4" stroke="#000" stroke-width="1"/><path d="M1 9.500H11.500" stroke="#000" stroke-width="1" fill="none"/><path d="M11.500 3.500V10" stroke="#000" stroke-opacity=".45" stroke-width="1" fill="none"/></svg><span class="s" style="left:16px">office</span><span class="s" style="left:101px">Verzeichnis</span><span class="s" style="left:256px">26.05.2013</span></div>
<div class="a row" style="left:194px;top:334px;height:15px;width:326px"><svg class="fi" width="13" height="11" viewBox="0 0 13 11"><path d="M0.500 9V2.500L2 0.500H5.500L7 2.500H10.500V9Z" fill="#f6f6b4" stroke="#000" stroke-width="1"/><path d="M1 9.500H11.500" stroke="#000" stroke-width="1" fill="none"/><path d="M11.500 3.500V10" stroke="#000" stroke-opacity=".45" stroke-width="1" fill="none"/></svg><span class="s" style="left:16px">org2</span><span class="s" style="left:101px">Verzeichnis</span><span class="s" style="left:256px">26.05.2013</span></div>
<div class="a row" style="left:194px;top:349px;height:9px;width:326px"><svg class="fi" width="13" height="11" viewBox="0 0 13 11"><path d="M0.500 9V2.500L2 0.500H5.500L7 2.500H10.500V9Z" fill="#f6f6b4" stroke="#000" stroke-width="1"/><path d="M1 9.500H11.500" stroke="#000" stroke-width="1" fill="none"/><path d="M11.500 3.500V10" stroke="#000" stroke-opacity=".45" stroke-width="1" fill="none"/></svg><span class="s" style="left:16px">photo</span><span class="s" style="left:101px">Verzeichnis</span><span class="s" style="left:256px">26.05.2013</span></div>
<div class="a" style="left:520px;top:77px;width:1px;height:297px;background:#000"></div>
<div class="a" style="left:521px;top:93px;width:15px;height:265px;background:#c0c0c0"></div>
<div class="a bt" style="left:521px;top:93px;width:15px;height:15px;"><svg class="a" style="left:0;top:0;" width="13" height="13" viewBox="0 0 13 13"><path d="M6.500 2.800L10.200 7H8V10H5V7H2.800Z" fill="#000"/></svg></div>
<div class="a" style="left:521px;top:108px;width:15px;height:1px;background:#000"></div>
<div class="a bt" style="left:521px;top:109px;width:15px;height:15px;"></div>
<div class="a" style="left:521px;top:124px;width:15px;height:1px;background:#000"></div>
<div class="a" style="left:521px;top:342px;width:15px;height:1px;background:#000"></div>
<div class="a bt" style="left:521px;top:343px;width:15px;height:15px;"><svg class="a" style="left:0;top:0;" width="13" height="13" viewBox="0 0 13 13"><path d="M6.500 10.200L10.200 6H8V3H5V6H2.800Z" fill="#000"/></svg></div>
<div class="a" style="left:0px;top:358px;width:536px;height:1px;background:#000"></div>
<div class="a" style="left:0px;top:359px;width:181px;height:15px;background:#fff"></div>
<div class="a bt" style="left:1px;top:359px;width:15px;height:15px;"><svg class="a" style="left:0;top:0;" width="13" height="13" viewBox="0 0 13 13"><path d="M2.800 6.500L7 2.800V5H10V8H7V10.200Z" fill="#808080"/></svg></div>
<div class="a" style="left:16px;top:359px;width:1px;height:15px;background:#000"></div>
<div class="a" style="left:149px;top:359px;width:1px;height:15px;background:#000"></div>
<div class="a bt" style="left:150px;top:359px;width:15px;height:15px;"><svg class="a" style="left:0;top:0;" width="13" height="13" viewBox="0 0 13 13"><path d="M10.200 6.500L6 2.800V5H3V8H6V10.200Z" fill="#808080"/></svg></div>
<div class="a bt" style="left:166px;top:359px;width:15px;height:15px;"><svg class="a" style="left:0;top:0;" width="13" height="13" viewBox="0 0 13 13"><path d="M6 3h1.500v2.500H10v1.500H7.500v2.500H6V7H3.500V5.500H6zM3.500 10.500H10v1.200H3.500z" fill="#000"/></svg></div>
<div class="a" style="left:185px;top:359px;width:335px;height:15px;background:#c0c0c0"></div>
<div class="a bt" style="left:185px;top:359px;width:15px;height:15px;"><svg class="a" style="left:0;top:0;" width="13" height="13" viewBox="0 0 13 13"><path d="M2.800 6.500L7 2.800V5H10V8H7V10.200Z" fill="#000"/></svg></div>
<div class="a" style="left:200px;top:359px;width:1px;height:15px;background:#000"></div>
<div class="a bt" style="left:201px;top:359px;width:14px;height:15px;"></div>
<div class="a" style="left:215px;top:359px;width:1px;height:15px;background:#000"></div>
<div class="a" style="left:504px;top:359px;width:1px;height:15px;background:#000"></div>
<div class="a bt" style="left:505px;top:359px;width:15px;height:15px;"><svg class="a" style="left:0;top:0;" width="13" height="13" viewBox="0 0 13 13"><path d="M10.200 6.500L6 2.800V5H3V8H6V10.200Z" fill="#000"/></svg></div>
<div class="a bt" style="left:521px;top:359px;width:15px;height:15px;"><svg class="a" style="left:0;top:0;" width="13" height="13" viewBox="0 0 13 13"><circle cx="7.500" cy="5" r="3" fill="#fff" stroke="#000" stroke-width="1.500"/><path d="M5.500 7.500L2.500 11" stroke="#000" stroke-width="2"/></svg></div>
<div class="a" style="left:0px;top:374px;width:536px;height:1px;background:#000"></div>
<div class="a" style="left:0px;top:375px;width:536px;height:17px;background:#c0c0c0;border-top:1px solid #fff"></div>
<div class="a" style="left:7px;top:377px;width:176px;height:14px;border:1px solid;border-color:#808080 #fff #fff #808080"><span class="s" style="position:absolute;left:2px;top:-2px">C: 1.49GB von 1.99GB frei</span></div>
<div class="a" style="left:187px;top:377px;width:177px;height:14px;border:1px solid;border-color:#808080 #fff #fff #808080"><span class="s" style="position:absolute;left:4px;top:-2px">84 Datei(en) (1.48MB) insgesamt</span></div>
</div></div>

<div id="right">
<div class="a" style="left:859px;top:51px;width:53px;height:177px;background:#c0c0c0;border:1px solid #000"></div>
<div class="a" style="left:862px;top:54px;width:47px;height:171px;border:1px solid #000;background:#c0c0c0"></div>
<div class="a" style="left:859px;top:73px;width:3px;height:1px;background:#000"></div>
<div class="a" style="left:909px;top:73px;width:3px;height:1px;background:#000"></div>
<div class="a" style="left:859px;top:205px;width:3px;height:1px;background:#000"></div>
<div class="a" style="left:909px;top:205px;width:3px;height:1px;background:#000"></div>
<div class="a" style="left:881px;top:51px;width:1px;height:3px;background:#000"></div>
<div class="a" style="left:889px;top:51px;width:1px;height:3px;background:#000"></div>
<div class="a" style="left:881px;top:225px;width:1px;height:3px;background:#000"></div>
<div class="a" style="left:889px;top:225px;width:1px;height:3px;background:#000"></div>
<div class="a tb" style="left:863px;top:55px;width:10px;height:10px;"><svg class="a" style="left:0;top:0;" width="10" height="10" viewBox="0 0 10 10"><path d="M1.500 8.500L4.500 5.500" stroke="#000" stroke-width="1"/><path d="M4 3l3 3M6 2l2 2M3.500 5.500L7 2" stroke="#000080" stroke-width="1.600"/></svg></div>
<div class="a" style="left:873px;top:55px;width:1px;height:10px;background:#000"></div>
<div class="a" style="left:874px;top:55px;width:24px;height:10px;background:#fff"></div>
<div class="a" style="left:898px;top:55px;width:1px;height:10px;background:#000"></div>
<div class="a tb" style="left:899px;top:55px;width:9px;height:10px;"><svg class="a" style="left:0;top:0;" width="9" height="10" viewBox="0 0 9 10"><path d="M1.500 3.500h6l-3 3.500z" fill="#000"/></svg></div>
<div class="a" style="left:863px;top:65px;width:45px;height:1px;background:#000"></div>
<div class="a" style="left:863px;top:66px;width:45px;height:140px;background:repeating-conic-gradient(#fff 0 25%,#c0c0c0 0 50%) 0 0/2px 2px"></div>
<div class="a" style="left:863px;top:86px;width:45px;height:21px;border:1px solid #000080"></div>
<div class="a" style="left:866px;top:69px;width:23px;height:14px;"><svg class="a" style="left:0;top:0;" width="23" height="14" viewBox="0 0 23 14"><rect x="0.500" y="0.500" width="22" height="13" fill="#c0c0c0" stroke="#000"/><path d="M1.500 12.500V1.500H21.500" stroke="#fff" fill="none"/><path d="M2 12.500h20V2" stroke="#808080" fill="none"/><path d="M4 4.500h15M4 6.500h15M4 8.500h15" stroke="#000" fill="none"/><rect x="4" y="10" width="2" height="1" fill="#00a000"/></svg></div>
<span class="a b" style="left:892px;top:68px;font-size:13px;line-height:16px">c</span>
<div class="a" style="left:866px;top:90px;width:23px;height:14px;"><svg class="a" style="left:0;top:0;" width="23" height="14" viewBox="0 0 23 14"><rect x="0.500" y="0.500" width="22" height="13" fill="#c0c0c0" stroke="#000"/><path d="M1.500 12.500V1.500H21.500" stroke="#fff" fill="none"/><path d="M2 12.500h20V2" stroke="#808080" fill="none"/><path d="M4 4.500h15M4 6.500h15M4 8.500h15" stroke="#000" fill="none"/><rect x="4" y="10" width="2" height="1" fill="#00a000"/></svg></div>
<span class="a b" style="left:892px;top:89px;font-size:13px;line-height:16px">d</span>
<div class="a" style="left:866px;top:110px;width:23px;height:14px;"><svg class="a" style="left:0;top:0;" width="23" height="14" viewBox="0 0 23 14"><rect x="0.500" y="0.500" width="22" height="13" fill="#c0c0c0" stroke="#000"/><path d="M1.500 12.500V1.500H21.500" stroke="#fff" fill="none"/><path d="M2 12.500h20V2" stroke="#808080" fill="none"/><rect x="3.500" y="4.500" width="16" height="4" fill="#c0e0c0" stroke="#609060"/><path d="M4 6.500h14" stroke="#fff"/></svg></div>
<span class="a b" style="left:892px;top:109px;font-size:13px;line-height:16px">r</span>
<div class="a" style="left:863px;top:206px;width:45px;height:1px;background:#000"></div>
<div class="a" style="left:863px;top:207px;width:45px;height:17px;background:#c0c0c0;border-top:1px solid #fff"></div>
<div class="a" style="left:865px;top:209px;width:41px;height:14px;border:1px solid;border-color:#808080 #fff #fff #808080"><span class="s" style="position:absolute;left:3px;top:-2px">data</span></div>
<div class="a" style="left:913px;top:51px;width:108px;height:312px;background:#c0c0c0;border:1px solid #000"></div>
<div class="a" style="left:916px;top:54px;width:102px;height:306px;border:1px solid #000;background:#c0c0c0"></div>
<div class="a" style="left:913px;top:73px;width:3px;height:1px;background:#000"></div>
<div class="a" style="left:1018px;top:73px;width:3px;height:1px;background:#000"></div>
<div class="a" style="left:913px;top:340px;width:3px;height:1px;background:#000"></div>
<div class="a" style="left:1018px;top:340px;width:3px;height:1px;background:#000"></div>
<div class="a" style="left:935px;top:51px;width:1px;height:3px;background:#000"></div>
<div class="a" style="left:998px;top:51px;width:1px;height:3px;background:#000"></div>
<div class="a" style="left:935px;top:360px;width:1px;height:3px;background:#000"></div>
<div class="a" style="left:998px;top:360px;width:1px;height:3px;background:#000"></div>
<div class="a tb" style="left:917px;top:55px;width:10px;height:10px;"><svg class="a" style="left:0;top:0;" width="10" height="10" viewBox="0 0 10 10"><path d="M1.500 8.500L4.500 5.500" stroke="#000" stroke-width="1"/><path d="M4 3l3 3M6 2l2 2M3.500 5.500L7 2" stroke="#000080" stroke-width="1.600"/></svg></div>
<div class="a" style="left:927px;top:55px;width:71px;height:10px;background:#0000c0"></div>
<div class="a tb" style="left:998px;top:55px;width:9px;height:10px;"><svg class="a" style="left:0;top:0;" width="9" height="10" viewBox="0 0 9 10"><path d="M1.500 3.500h6l-3 3.500z" fill="#000"/></svg></div>
<div class="a" style="left:1007px;top:55px;width:1px;height:10px;background:#000"></div>
<div class="a tb" style="left:1008px;top:55px;width:9px;height:10px;"><svg class="a" style="left:0;top:0;" width="9" height="10" viewBox="0 0 9 10"><path d="M1.500 6.500h6l-3 -3.500z" fill="#000"/></svg></div>
<div class="a" style="left:917px;top:65px;width:100px;height:1px;background:#000"></div>
<div class="a" style="left:917px;top:66px;width:100px;height:91px;background:#c0c0c0;border:2px solid;border-color:#fff #808080 #808080 #fff"></div>
<div class="a" style="left:915px;top:68px;width:100px;height:16px;text-align:center"><span class="s" style="transform-origin:50% 0;position:relative;top:1px">Hauptdesktop</span></div>
<div class="a" style="left:921px;top:84px;width:93px;height:69px;border:1px solid;border-color:#808080 #fff #fff #808080"></div>
<div class="a" style="left:922px;top:85px;width:91px;height:67px;background:#c0c0c0;border:1px solid #000;border-top-width:2px;border-left-width:1px"></div>
<div class="a" style="left:924px;top:87px;width:88px;height:2px;background:#fff"></div>
<div class="a" style="left:920px;top:69px;width:95px;height:15px;border:1px dotted #606060"></div>
<svg class="a" style="left:917px;top:66px" width="100" height="91" viewBox="917 66 100 91"><rect x="928" y="91" width="3" height="3" fill="#000020"/><rect x="937" y="91" width="3" height="3" fill="#000020"/><rect x="946" y="91" width="3" height="3" fill="#000020"/><rect x="954" y="91" width="3" height="3" fill="#000020"/><rect x="963" y="91" width="3" height="3" fill="#000020"/><rect x="928" y="97" width="3" height="3" fill="#000020"/><rect x="937" y="97" width="3" height="3" fill="#000020"/><rect x="946" y="97" width="3" height="3" fill="#000020"/><rect x="954" y="97" width="3" height="3" fill="#000020"/><rect x="963" y="97" width="3" height="3" fill="#000020"/><rect x="928" y="103" width="3" height="3" fill="#000020"/><rect x="937" y="103" width="3" height="3" fill="#000020"/><rect x="946" y="103" width="3" height="3" fill="#000020"/><rect x="954" y="103" width="3" height="3" fill="#000020"/><rect x="963" y="103" width="3" height="3" fill="#000020"/><rect x="928" y="109" width="3" height="3" fill="#000020"/><rect x="937" y="109" width="3" height="3" fill="#000020"/><rect x="946" y="109" width="3" height="3" fill="#000020"/><rect x="954" y="109" width="3" height="3" fill="#000020"/><rect x="963" y="109" width="3" height="3" fill="#000020"/><rect x="928" y="115" width="3" height="3" fill="#000020"/><rect x="937" y="115" width="3" height="3" fill="#000020"/><rect x="954" y="115" width="3" height="3" fill="#000020"/><rect x="963" y="115" width="3" height="3" fill="#000020"/><rect x="937" y="121" width="3" height="3" fill="#000020"/><rect x="954" y="121" width="3" height="3" fill="#000020"/><rect x="937" y="128" width="3" height="3" fill="#000020"/><rect x="946" y="128" width="3" height="3" fill="#000020"/><rect x="954" y="128" width="3" height="3" fill="#000020"/><rect x="937" y="134" width="3" height="3" fill="#000020"/><rect x="946" y="134" width="3" height="3" fill="#000020"/><rect x="954" y="134" width="3" height="3" fill="#000020"/><rect x="946" y="140" width="3" height="3" fill="#000020"/><rect x="954" y="140" width="3" height="3" fill="#000020"/></svg>
<div class="a" style="left:917px;top:157px;width:100px;height:92px;background:#808080;border:2px solid #000;border-right:1px solid #404040;border-bottom:1px solid #404040"></div>
<div class="a" style="left:915px;top:160px;width:100px;height:16px;text-align:center"><span class="s" style="transform-origin:50% 0;position:relative;top:1px">PC Tools 2.0</span></div>
<div class="a" style="left:921px;top:176px;width:93px;height:69px;border:1px solid;border-color:#808080 #fff #fff #808080"></div>
<div class="a" style="left:922px;top:177px;width:91px;height:67px;background:#00c2c4;border:1px solid #000;border-top-width:2px;border-left-width:2px"></div>
<div class="a" style="left:924px;top:179px;width:88px;height:2px;background:#fff"></div>
<svg class="a" style="left:917px;top:157px" width="100" height="92" viewBox="917 157 100 92"><rect x="928" y="183" width="3" height="3" fill="#003060"/><rect x="937" y="183" width="3" height="3" fill="#003060"/><rect x="946" y="183" width="3" height="3" fill="#003060"/><rect x="954" y="183" width="3" height="3" fill="#003060"/><rect x="963" y="183" width="3" height="3" fill="#003060"/><rect x="928" y="189" width="3" height="3" fill="#003060"/><rect x="937" y="189" width="3" height="3" fill="#003060"/><rect x="946" y="189" width="3" height="3" fill="#003060"/><rect x="954" y="189" width="3" height="3" fill="#003060"/><rect x="963" y="189" width="3" height="3" fill="#003060"/><rect x="928" y="195" width="3" height="3" fill="#003060"/><rect x="937" y="195" width="3" height="3" fill="#003060"/><rect x="946" y="195" width="3" height="3" fill="#003060"/><rect x="954" y="195" width="3" height="3" fill="#003060"/><rect x="928" y="201" width="3" height="3" fill="#003060"/><rect x="936.500" y="202.500" width="44" height="32" fill="#fff" stroke="#000"/><rect x="936" y="202" width="45" height="2" fill="#000"/><path d="M951 203.500h16" stroke="#fff" stroke-dasharray="1 1"/><rect x="998" y="184" width="4" height="13" fill="#fff"/><rect x="1003" y="184" width="7" height="25" fill="#fff"/><path d="M998 183.500h4M1003 183.500h7" stroke="#fff" stroke-dasharray="1 1"/><path d="M997.500 183v15h5v-15M1002.500 183v27h8v-27" stroke="#606060" fill="none" stroke-width="0.500"/><rect x="983" y="238" width="28" height="5" fill="#fff" stroke="#000" stroke-width="1"/><path d="M987 239.500h20" stroke="#000" stroke-dasharray="1 1"/><path d="M984 241.500h27" stroke="#000"/></svg>
<div class="a" style="left:917px;top:249px;width:100px;height:92px;background:#c0c0c0;border:2px solid;border-color:#fff #808080 #808080 #fff"></div>
<div class="a" style="left:915px;top:251px;width:100px;height:16px;text-align:center"><span class="s" style="transform-origin:50% 0;position:relative;top:1px">Extra</span></div>
<div class="a" style="left:921px;top:268px;width:93px;height:69px;border:1px solid;border-color:#808080 #fff #fff #808080"></div>
<div class="a" style="left:922px;top:269px;width:91px;height:67px;background:#c0c0c0;border:1px solid #000;border-top-width:2px;border-left-width:1px"></div>
<div class="a" style="left:924px;top:271px;width:88px;height:2px;background:#fff"></div>
<div class="a" style="left:917px;top:341px;width:100px;height:1px;background:#000"></div>
<div class="a" style="left:917px;top:342px;width:100px;height:17px;background:#c0c0c0;border-top:1px solid #fff"></div>
</div>

<div id="status">
<div class="a" style="left:0px;top:770px;width:1022px;height:6px;background:#f6f6f6;border-top:1px solid #e4ffff"></div>
<svg class="a" style="left:715px;top:771px" width="220" height="5" viewBox="0 0 220 5"><g fill="#f0f4ff" stroke="#3858a0" stroke-width="1.500"><rect x="9" y="3.500" width="12" height="8" rx="2"/><rect x="113" y="3.500" width="14" height="8" rx="2"/><rect x="136" y="3.500" width="10" height="8"/><rect x="197" y="3.500" width="13" height="8" rx="2"/></g><g fill="none" stroke="#a8a8a8" stroke-width="1.500"><circle cx="36" cy="10.500" r="6.500"/><rect x="55" y="4" width="9" height="8" stroke="#707070"/><path d="M79 7l3.500 -3.500l3.500 3.500" stroke="#606060"/><rect x="96" y="4.500" width="11" height="8" rx="2" stroke="#c8c8c8"/><rect x="156" y="4.500" width="12" height="8" rx="1"/><circle cx="184" cy="10.500" r="6.500" stroke="#c0c0c0"/></g></svg>
<div class="a" style="left:678px;top:709px;width:342px;height:61px;background:#c0c0c0;border:1px solid #000"></div>
<div class="a" style="left:679px;top:710px;width:76px;height:59px;border:1px solid;border-color:#fff #808080 #808080 #fff;border-top-width:2px;border-left-width:2px"></div>
<div class="a" style="left:755px;top:710px;width:75px;height:59px;border:1px solid;border-color:#fff #808080 #808080 #fff;border-top-width:2px;border-left-width:2px"></div>
<div class="a" style="left:830px;top:710px;width:75px;height:59px;border:1px solid;border-color:#fff #808080 #808080 #fff;border-top-width:2px;border-left-width:2px"></div>
<div class="a" style="left:905px;top:710px;width:57px;height:59px;border:1px solid;border-color:#fff #808080 #808080 #fff;border-top-width:2px;border-left-width:2px"></div>
<div class="a" style="left:962px;top:710px;width:57px;height:59px;border:1px solid;border-color:#fff #808080 #808080 #fff;border-top-width:2px;border-left-width:2px"></div>
<div class="a" style="left:681px;top:714px;width:73px;height:14px;text-align:center"><span class="s" style="transform-origin:50% 0">Speicher</span></div>
<div class="a" style="left:684px;top:733px;width:67px;height:10px;background:#40b840;border:1px solid;border-color:#b0c0b0 #fff #fff #c0c0c0"></div>
<div class="a" style="left:685px;top:734px;width:15px;height:8px;background:repeating-conic-gradient(#c83030 0 25%,#e8d0d0 0 50%) 0 0/2px 2px"></div>
<svg class="a" style="left:746px;top:743px" width="9" height="5" viewBox="0 0 9 5"><path d="M4.500 0L9 4.500H0z" fill="#d02020"/></svg>
<div class="a" style="left:685px;top:751px;width:7px;height:7px;background:#50b050;border-right:1px solid #fff;border-bottom:1px solid #fff"></div>
<span class="a s" style="left:696px;top:747px">78% frei</span>
<div class="a" style="left:756px;top:714px;width:73px;height:14px;text-align:center"><span class="s" style="transform-origin:50% 0">Ressourcen</span></div>
<div class="a" style="left:759px;top:733px;width:67px;height:10px;background:#40b840;border:1px solid;border-color:#b0c0b0 #fff #fff #c0c0c0"></div>
<div class="a" style="left:760px;top:734px;width:19px;height:8px;background:repeating-conic-gradient(#c83030 0 25%,#e8d0d0 0 50%) 0 0/2px 2px"></div>
<svg class="a" style="left:811px;top:743px" width="9" height="5" viewBox="0 0 9 5"><path d="M4.500 0L9 4.500H0z" fill="#d02020"/></svg>
<div class="a" style="left:760px;top:751px;width:7px;height:7px;background:#50b050;border-right:1px solid #fff;border-bottom:1px solid #fff"></div>
<span class="a s" style="left:771px;top:747px">70% frei</span>
<div class="a" style="left:831px;top:714px;width:73px;height:14px;text-align:center"><span class="s" style="transform-origin:50% 0">C:</span></div>
<div class="a" style="left:834px;top:733px;width:67px;height:10px;background:#40b840;border:1px solid;border-color:#b0c0b0 #fff #fff #c0c0c0"></div>
<div class="a" style="left:835px;top:734px;width:15px;height:8px;background:repeating-conic-gradient(#c83030 0 25%,#e8d0d0 0 50%) 0 0/2px 2px"></div>
<svg class="a" style="left:896px;top:743px" width="9" height="5" viewBox="0 0 9 5"><path d="M4.500 0L9 4.500H0z" fill="#d02020"/></svg>
<div class="a" style="left:835px;top:751px;width:7px;height:7px;background:#50b050;border-right:1px solid #fff;border-bottom:1px solid #fff"></div>
<span class="a s" style="left:846px;top:747px">74% frei</span>
<svg class="a" style="left:906px;top:710px" width="57" height="58" viewBox="0 0 57 58"><rect x="6" y="7" width="46" height="3" fill="#808080"/><rect x="7.500" y="9.500" width="40" height="43" fill="#fff" stroke="#000"/><rect x="9.500" y="9.500" width="40" height="44" fill="#fff" stroke="#000"/><rect x="11.500" y="9.500" width="40" height="45" fill="#fff" stroke="#000"/><rect x="8" y="9" width="44" height="3" fill="#000"/><rect x="24" y="8" width="4" height="5" fill="#808080"/><rect x="34" y="8" width="4" height="5" fill="#808080"/><rect x="45.500" y="48.500" width="6" height="6" fill="#fff" stroke="#000"/><path d="M46 54l5-5" stroke="#000"/><text x="33" y="27.500" font-size="12.500" text-anchor="middle" font-family="Liberation Sans,sans-serif" textLength="21" lengthAdjust="spacingAndGlyphs">Aug</text><text x="33" y="48" font-size="23.500" font-weight="bold" text-anchor="middle" font-family="Liberation Sans,sans-serif" letter-spacing="0.500">11</text></svg>
<svg class="a" style="left:962px;top:710px" width="57" height="58" viewBox="0 0 57 58"><rect x="26.8" y="5.8" width="5" height="5" fill="#fff"/><rect x="26.0" y="5.0" width="5" height="5" fill="#888"/><rect x="38.8" y="9.7" width="3" height="3" fill="#fff"/><rect x="38.0" y="8.9" width="3" height="3" fill="#888"/><rect x="46.9" y="17.8" width="3" height="3" fill="#fff"/><rect x="46.1" y="17.0" width="3" height="3" fill="#888"/><rect x="48.8" y="27.8" width="5" height="5" fill="#fff"/><rect x="48.0" y="27.0" width="5" height="5" fill="#888"/><rect x="46.9" y="39.8" width="3" height="3" fill="#fff"/><rect x="46.1" y="39.0" width="3" height="3" fill="#888"/><rect x="38.8" y="47.9" width="3" height="3" fill="#fff"/><rect x="38.0" y="47.1" width="3" height="3" fill="#888"/><rect x="26.8" y="49.8" width="5" height="5" fill="#fff"/><rect x="26.0" y="49.0" width="5" height="5" fill="#888"/><rect x="16.8" y="47.9" width="3" height="3" fill="#fff"/><rect x="16.0" y="47.1" width="3" height="3" fill="#888"/><rect x="8.7" y="39.8" width="3" height="3" fill="#fff"/><rect x="7.9" y="39.0" width="3" height="3" fill="#888"/><rect x="4.8" y="27.8" width="5" height="5" fill="#fff"/><rect x="4.0" y="27.0" width="5" height="5" fill="#888"/><rect x="8.7" y="17.8" width="3" height="3" fill="#fff"/><rect x="7.9" y="17.0" width="3" height="3" fill="#888"/><rect x="16.8" y="9.7" width="3" height="3" fill="#fff"/><rect x="16.0" y="8.9" width="3" height="3" fill="#888"/><rect x="27.0" y="28.0" width="4" height="4" fill="#fff"/><rect x="26.5" y="27.5" width="3" height="3" fill="#a0a0a0"/><path d="M29.5 28.5L36.5 17.5" stroke="#000" stroke-width="1.200"/><path d="M29.5 28.5L47.5 22.5" stroke="#000" stroke-width="1"/></svg>
</div>


</div>
</body>
</html>
